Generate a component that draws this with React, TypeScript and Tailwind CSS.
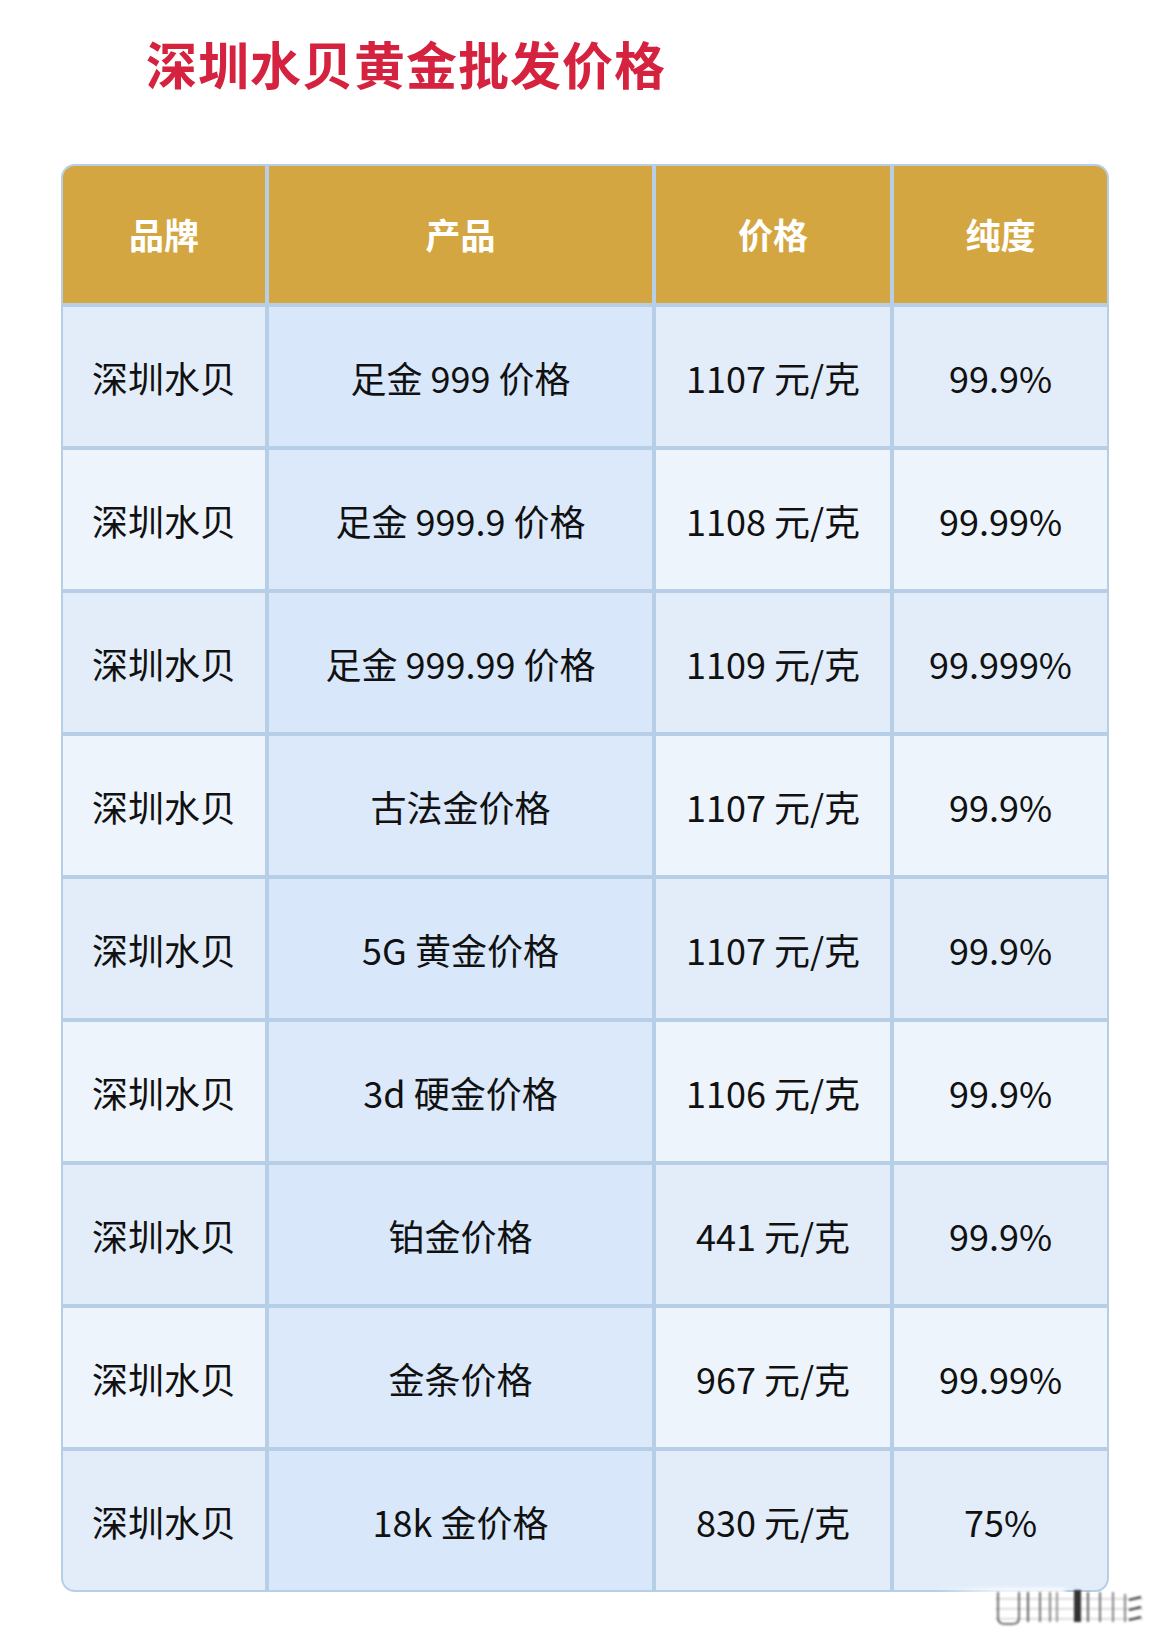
const FONT = "font-['Noto_Sans_CJK_SC','Noto_Sans',sans-serif]";

const rows = [
  { product: "足金 999 价格", price: "1107 元/克", purity: "99.9%" },
  { product: "足金 999.9 价格", price: "1108 元/克", purity: "99.99%" },
  { product: "足金 999.99 价格", price: "1109 元/克", purity: "99.999%" },
  { product: "古法金价格", price: "1107 元/克", purity: "99.9%" },
  { product: "5G 黄金价格", price: "1107 元/克", purity: "99.9%" },
  { product: "3d 硬金价格", price: "1106 元/克", purity: "99.9%" },
  { product: "铂金价格", price: "441 元/克", purity: "99.9%" },
  { product: "金条价格", price: "967 元/克", purity: "99.99%" },
  { product: "18k 金价格", price: "830 元/克", purity: "75%" },
];

const headers = ["品牌", "产品", "价格", "纯度"];

// blurred watermark that sits over the table's bottom-right corner
function Watermark() {
  return (
    <div className="absolute left-[874px] top-full -mt-[8px] w-[220px] h-[44px] pointer-events-none">
      <div className="absolute left-0 top-[4px] h-[14px] w-[130px] bg-gradient-to-r from-white/0 via-white/80 to-white/90 blur-[2px]" />
      <svg viewBox="0 0 150 36" className="absolute left-[60px] top-[6px] w-[150px] h-[36px] blur-[0.9px]">
        <rect x="0" y="8" width="148" height="1.5" fill="#aaa" opacity="0.5" />
        <rect x="0" y="18" width="148" height="1.5" fill="#aaa" opacity="0.5" />
        <rect x="0" y="28" width="148" height="1.5" fill="#aaa" opacity="0.5" />
        <path d="M3 2 V28 Q3 34 10 34 H17 Q24 34 24 28 V2" fill="none" stroke="#444" strokeWidth="1.5" />
        <rect x="32" y="2" width="2" height="30" fill="#666" />
        <rect x="44" y="2" width="2" height="30" fill="#777" />
        <rect x="54" y="2" width="2" height="30" fill="#888" />
        <rect x="61" y="2" width="2" height="30" fill="#999" />
        <rect x="79" y="0" width="7" height="32" fill="#333" />
        <rect x="92" y="2" width="2" height="30" fill="#666" />
        <rect x="104" y="2" width="2" height="30" fill="#777" />
        <rect x="117" y="2" width="2" height="30" fill="#888" />
        <rect x="129" y="4" width="2" height="28" fill="#888" />
        <path d="M134 10 L146 7 M134 20 L146 17 M134 30 L146 27" stroke="#333" strokeWidth="2" />
      </svg>
    </div>
  );
}

export default function App() {
  return (
    <div className={`w-[1170px] h-[1651px] bg-white ${FONT}`}>
      <h1 className="pt-[33px] pl-[146px] text-[51px] leading-[60px] font-bold tracking-[1px] text-[#d4223f]">
        深圳水贝黄金批发价格
      </h1>

      <div className="relative mt-[71px] ml-[61px] w-[1048px]">
        <div className="grid grid-cols-[202px_383px_234px_213px] gap-[4px] p-[2px] bg-[#b7cee7] rounded-[14px] overflow-hidden">
          {headers.map((h, i) => (
            <div
              key={h}
              className={`h-[137px] flex items-center justify-center bg-[#d4a641] text-white text-[35px] font-bold ${
                i === 0 ? "rounded-tl-[12px]" : ""
              } ${i === 3 ? "rounded-tr-[12px]" : ""}`}
            >
              {h}
            </div>
          ))}
          {rows.map((r, idx) => {
            const odd = idx % 2 === 0;
            const last = idx === rows.length - 1;
            const base = odd ? "bg-[#e2edf9]" : "bg-[#edf4fc]";
            const mid = odd ? "bg-[#d8e8fa]" : "bg-[#dbe9fa]";
            const cell = "h-[139px] flex items-center justify-center text-[36px] text-[#111] whitespace-nowrap";
            return [
              <div key={`b${idx}`} className={`${cell} ${base} ${last ? "rounded-bl-[12px]" : ""}`}>
                深圳水贝
              </div>,
              <div key={`p${idx}`} className={`${cell} ${mid}`}>
                {r.product}
              </div>,
              <div key={`c${idx}`} className={`${cell} ${base}`}>
                {r.price}
              </div>,
              <div key={`u${idx}`} className={`${cell} ${base} ${last ? "rounded-br-[12px]" : ""}`}>
                {r.purity}
              </div>,
            ];
          })}
        </div>
        <Watermark />
      </div>
    </div>
  );
}
